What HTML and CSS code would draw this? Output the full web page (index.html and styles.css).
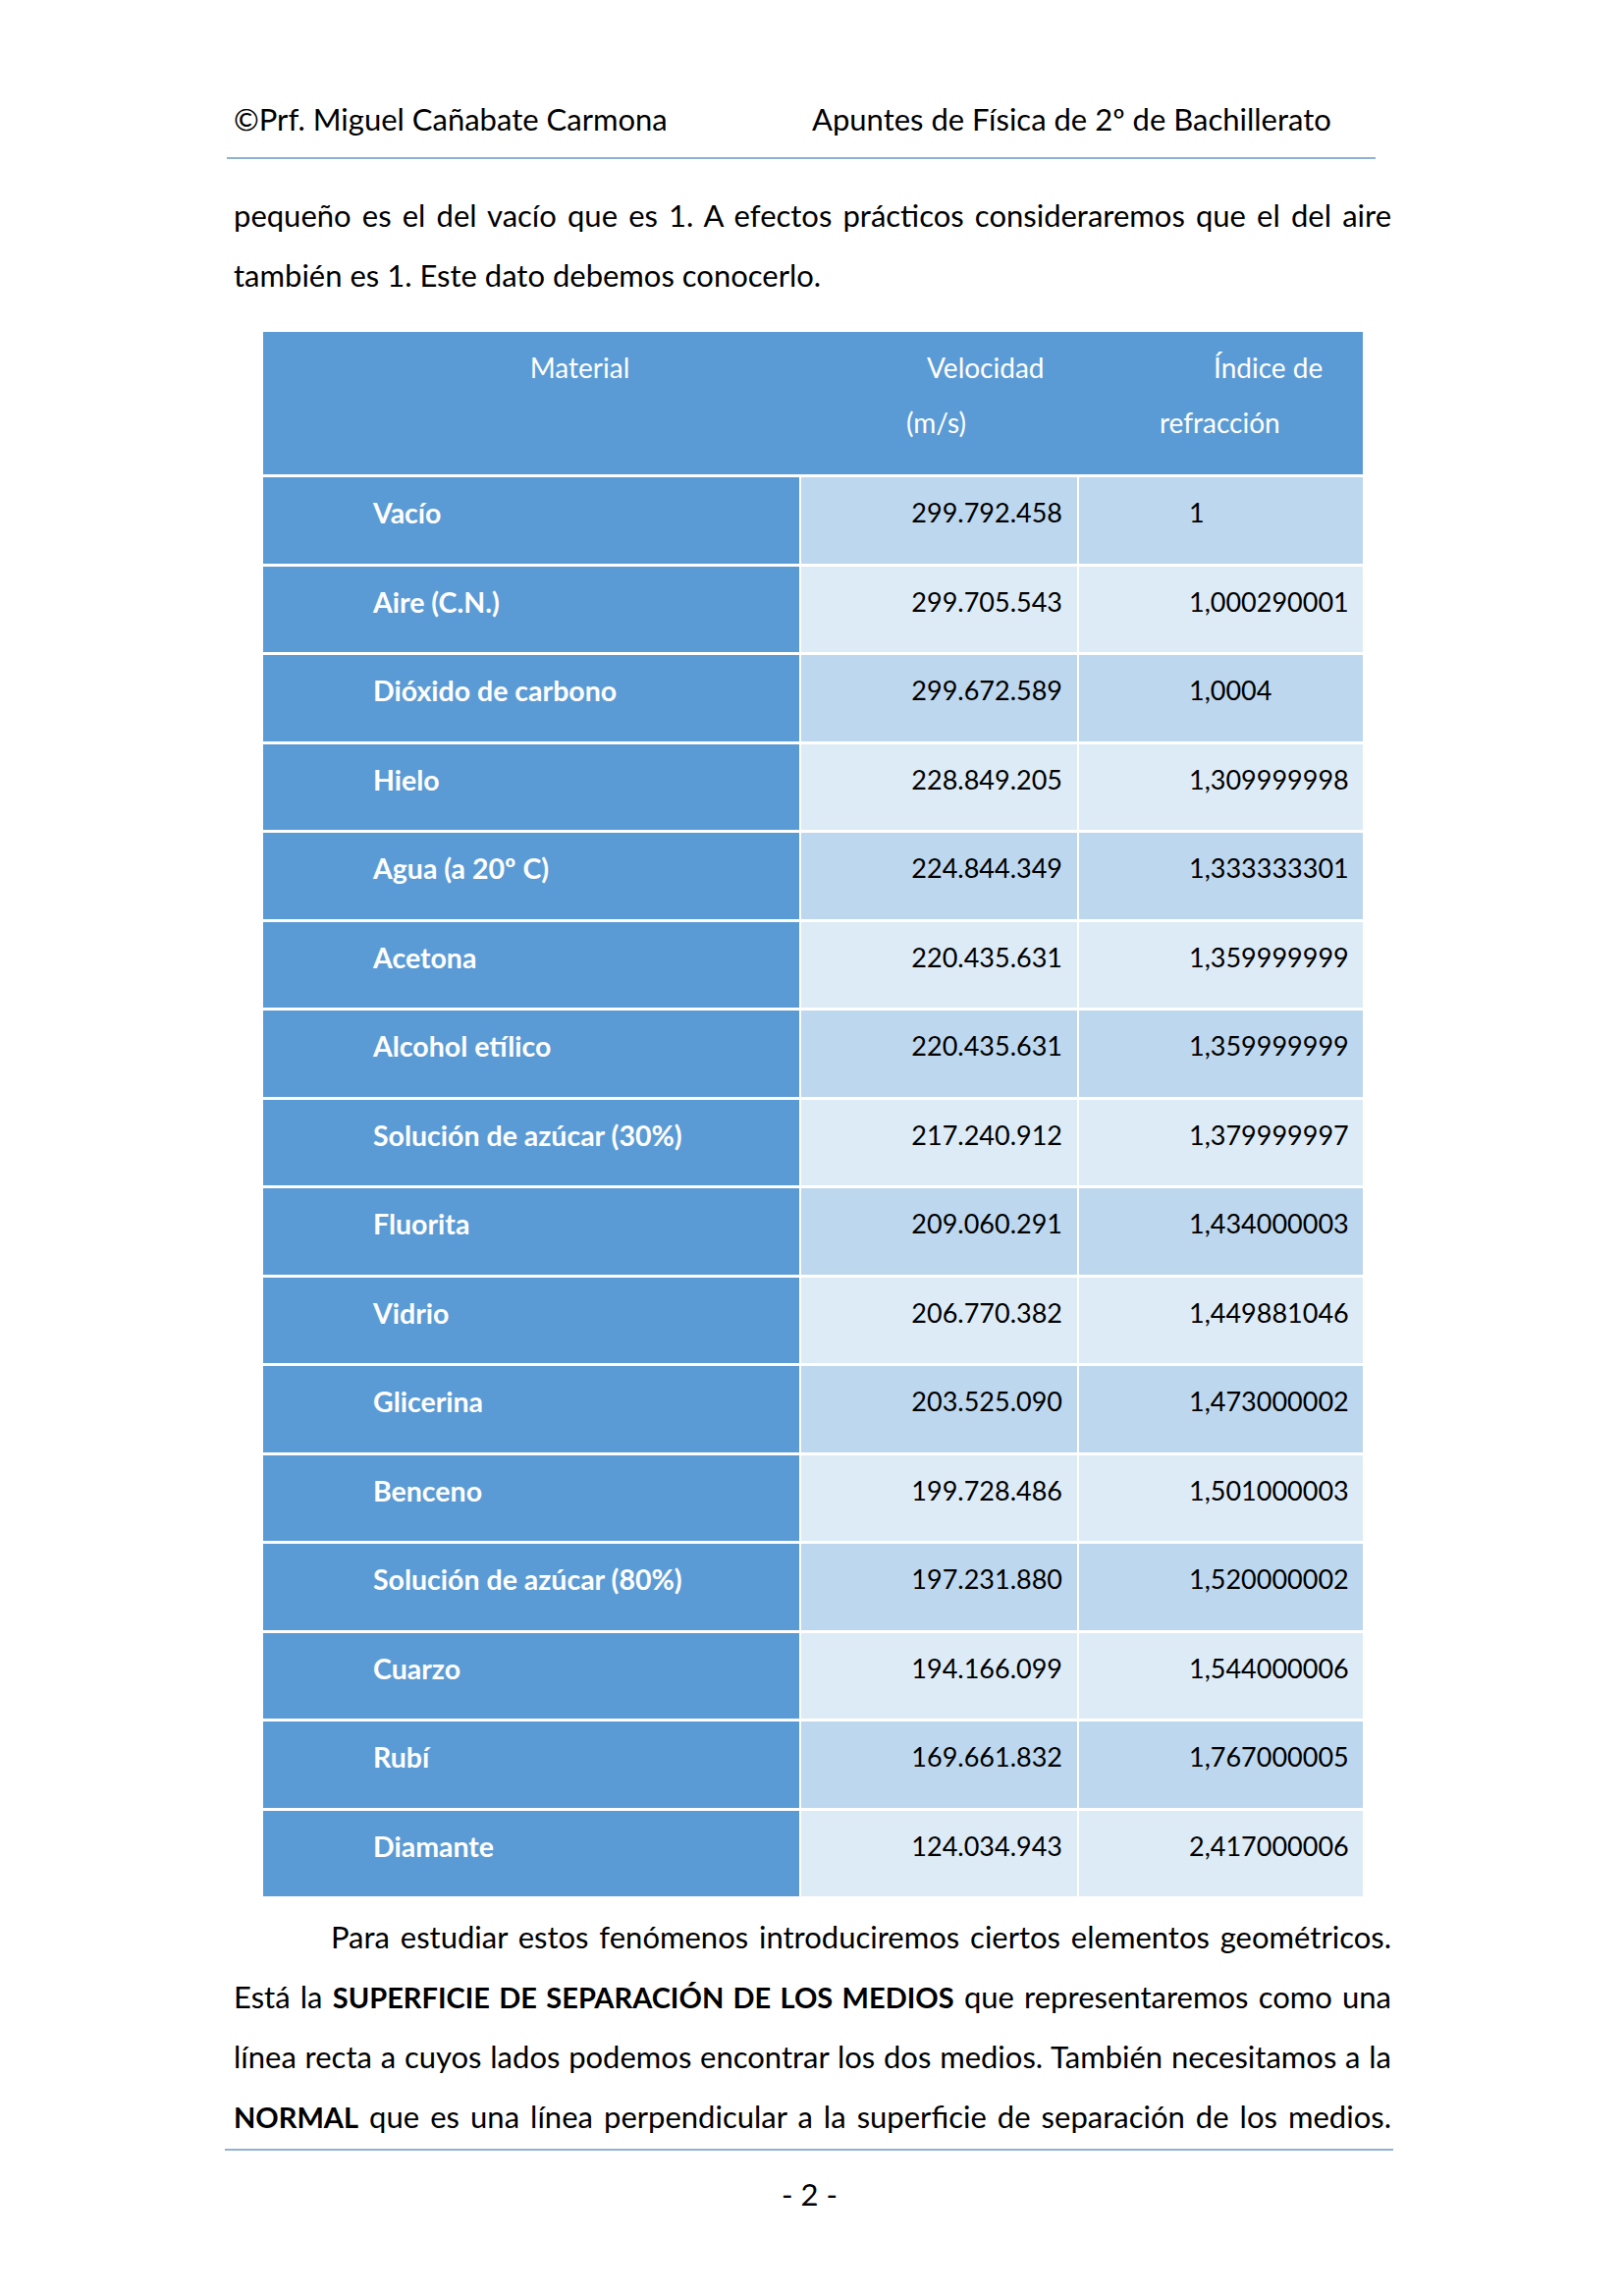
FILE: index.html
```html
<!DOCTYPE html>
<html lang="es">
<head>
<meta charset="utf-8">
<title>Apuntes de Física de 2º de Bachillerato</title>
<link rel="stylesheet" href="styles.css">
</head>
<body>
<div class="page">
  <header class="running-head">
    <span class="author">©Prf. Miguel Cañabate Carmona</span>
    <span class="course">Apuntes de Física de 2º de Bachillerato</span>
  </header>
  <div class="rule rule-top"></div>

  <p class="para para-intro">
    <span class="ln">pequeño es el del vacío que es 1. A efectos prácticos consideraremos que el del aire</span>
    <span class="ln last">también es 1. Este dato debemos conocerlo.</span>
  </p>

  <div class="tbl">
    <div class="thead">
      <div class="th th-mat"><span class="hl">Material</span></div>
      <div class="th th-vel"><span class="hl hl-a">Velocidad</span><span class="hl hl-b">(m/s)</span></div>
      <div class="th th-idx"><span class="hl hl-a">Índice de</span><span class="hl hl-b">refracción</span></div>
    </div>

    <div class="td name">Vacío</div><div class="td vel odd">299.792.458</div><div class="td idx odd">1</div>
    <div class="td name">Aire (C.N.)</div><div class="td vel even">299.705.543</div><div class="td idx even">1,000290001</div>
    <div class="td name">Dióxido de carbono</div><div class="td vel odd">299.672.589</div><div class="td idx odd">1,0004</div>
    <div class="td name">Hielo</div><div class="td vel even">228.849.205</div><div class="td idx even">1,309999998</div>
    <div class="td name">Agua (a 20º C)</div><div class="td vel odd">224.844.349</div><div class="td idx odd">1,333333301</div>
    <div class="td name">Acetona</div><div class="td vel even">220.435.631</div><div class="td idx even">1,359999999</div>
    <div class="td name">Alcohol etílico</div><div class="td vel odd">220.435.631</div><div class="td idx odd">1,359999999</div>
    <div class="td name">Solución de azúcar (30%)</div><div class="td vel even">217.240.912</div><div class="td idx even">1,379999997</div>
    <div class="td name">Fluorita</div><div class="td vel odd">209.060.291</div><div class="td idx odd">1,434000003</div>
    <div class="td name">Vidrio</div><div class="td vel even">206.770.382</div><div class="td idx even">1,449881046</div>
    <div class="td name">Glicerina</div><div class="td vel odd">203.525.090</div><div class="td idx odd">1,473000002</div>
    <div class="td name">Benceno</div><div class="td vel even">199.728.486</div><div class="td idx even">1,501000003</div>
    <div class="td name">Solución de azúcar (80%)</div><div class="td vel odd">197.231.880</div><div class="td idx odd">1,520000002</div>
    <div class="td name">Cuarzo</div><div class="td vel even">194.166.099</div><div class="td idx even">1,544000006</div>
    <div class="td name">Rubí</div><div class="td vel odd">169.661.832</div><div class="td idx odd">1,767000005</div>
    <div class="td name">Diamante</div><div class="td vel even">124.034.943</div><div class="td idx even">2,417000006</div>
  </div>

  <p class="para para-after">
    <span class="ln indent">Para estudiar estos fenómenos introduciremos ciertos elementos geométricos.</span>
    <span class="ln">Está la <b>SUPERFICIE DE SEPARACIÓN DE LOS MEDIOS</b> que representaremos como una</span>
    <span class="ln">línea recta a cuyos lados podemos encontrar los dos medios. También necesitamos a la</span>
    <span class="ln"><b>NORMAL</b> que es una línea perpendicular a la superficie de separación de los medios.</span>
  </p>
  <div class="rule rule-bottom"></div>
  <div class="folio">- 2 -</div>
</div>
</body>
</html>
```

FILE: styles.css
```css
html, body {
  margin: 0;
  padding: 0;
  background: #ffffff;
}

body {
  font-family: "Lato", "Open Sans", "Noto Sans", sans-serif;
  color: #000000;
  font-size: 31px;
}

.page {
  width: 1653px;
  box-sizing: border-box;
  padding: 101px 236px 0 238px;
}

.running-head {
  display: grid;
  grid-template-columns: 589px auto;
  height: 40px;
  line-height: 40px;
  white-space: nowrap;
}

.rule {
  height: 2px;
  background: #8fb2d3;
}

.rule-top {
  margin: 19px 16px 0 -7px;
}

.para {
  margin: 0;
  line-height: 61px;
}

.para-intro {
  margin-top: 27px;
}

.ln {
  display: block;
  text-align: justify;
  text-align-last: justify;
  white-space: nowrap;
}

.ln.last {
  text-align-last: left;
}

.ln.indent {
  padding-left: 99px;
}

.para-after b {
  font-weight: 700;
  font-size: 29px;
}

/* ---------- table ---------- */
.tbl {
  margin: 27px 29px 0 30px;
  display: grid;
  grid-template-columns: 546px 281px 289px;
  grid-template-rows: 145px;
  grid-auto-rows: 87.5px;
  column-gap: 2px;
  row-gap: 3px;
  font-size: 28px;
}

.thead {
  grid-column: 1 / -1;
  background: #5b9bd5;
  color: #ffffff;
  display: grid;
  grid-template-columns: 548px 283px 289px;
  line-height: 56px;
}

.th {
  padding-top: 8px;
  display: flex;
  flex-direction: column;
  white-space: nowrap;
}

.th-mat {
  align-items: center;
  padding-left: 112px;
  padding-right: 15px;
}

.th-vel .hl-a { padding-left: 128px; }
.th-vel .hl-b { padding-left: 107px; }
.th-idx .hl-a { padding-left: 137px; }
.th-idx .hl-b { padding-left: 82px; }

.td {
  box-sizing: border-box;
  padding-top: 16px;
  line-height: 40px;
  white-space: nowrap;
}

.name {
  background: #5b9bd5;
  color: #ffffff;
  font-weight: 700;
  font-size: 28.5px;
  padding-left: 112px;
}

.vel {
  text-align: right;
  padding-right: 15px;
  font-size: 27px;
}

.idx {
  padding-left: 112px;
  font-size: 27px;
}

.odd { background: #bdd7ee; }
.even { background: #ddebf7; }

.para-after {
  margin-top: 11px;
}

.rule-bottom {
  margin: 2px -2px 0 -9px;
}

.folio {
  margin-top: 24px;
  line-height: 40px;
  text-align: center;
  padding-right: 6px;
}
```
